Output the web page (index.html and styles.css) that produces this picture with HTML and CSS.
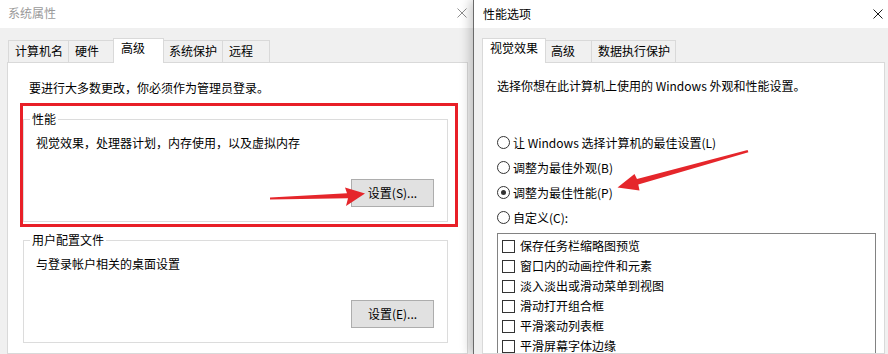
FILE: index.html
```html
<!DOCTYPE html>
<html lang="zh-CN">
<head>
<meta charset="utf-8">
<title>系统属性 - 性能选项</title>
<link rel="stylesheet" href="styles.css">
</head>
<body>
<div class="screen">
  <section class="win win-left">
    <header class="titlebar titlebar-inactive">
      <span class="title">系统属性</span>
      <svg class="close" width="10" height="10" viewBox="0 0 10 10"><path d="M0.5 0.5L9.5 9.5M9.5 0.5L0.5 9.5"/></svg>
    </header>
    <div class="win-body">
      <div class="tabs">
        <div class="tab">计算机名</div>
        <div class="tab">硬件</div>
        <div class="tab active">高级</div>
        <div class="tab">系统保护</div>
        <div class="tab">远程</div>
      </div>
      <div class="panel panel-left">
        <p class="note">要进行大多数更改，你必须作为管理员登录。</p>
        <fieldset class="group group-first">
          <legend>性能</legend>
          <div class="group-body">
            <p class="desc">视觉效果，处理器计划，内存使用，以及虚拟内存</p>
            <div class="btn-row"><button class="btn">设置(S)...</button></div>
          </div>
        </fieldset>
        <fieldset class="group group-second">
          <legend>用户配置文件</legend>
          <div class="group-body">
            <p class="desc">与登录帐户相关的桌面设置</p>
            <div class="btn-row"><button class="btn">设置(E)...</button></div>
          </div>
        </fieldset>
      </div>
    </div>
  </section>

  <section class="win win-right">
    <header class="titlebar">
      <span class="title">性能选项</span>
      <svg class="close" width="10" height="10" viewBox="0 0 10 10"><path d="M0.5 0.5L9.5 9.5M9.5 0.5L0.5 9.5"/></svg>
    </header>
    <div class="win-body">
      <div class="tabs">
        <div class="tab active">视觉效果</div>
        <div class="tab">高级</div>
        <div class="tab">数据执行保护</div>
      </div>
      <div class="panel panel-right">
        <p class="note">选择你想在此计算机上使用的 Windows 外观和性能设置。</p>
        <div class="radios">
          <label class="radio-row"><span class="radio"></span>让 Windows 选择计算机的最佳设置(L)</label>
          <label class="radio-row"><span class="radio"></span>调整为最佳外观(B)</label>
          <label class="radio-row"><span class="radio checked"></span>调整为最佳性能(P)</label>
          <label class="radio-row"><span class="radio"></span>自定义(C):</label>
        </div>
        <div class="listbox">
          <div class="check-row"><span class="check"></span>保存任务栏缩略图预览</div>
          <div class="check-row"><span class="check"></span>窗口内的动画控件和元素</div>
          <div class="check-row"><span class="check"></span>淡入淡出或滑动菜单到视图</div>
          <div class="check-row"><span class="check"></span>滑动打开组合框</div>
          <div class="check-row"><span class="check"></span>平滑滚动列表框</div>
          <div class="check-row"><span class="check"></span>平滑屏幕字体边缘</div>
        </div>
      </div>
    </div>
  </section>

  <svg class="annot" width="888" height="354" viewBox="0 0 888 354">
    <rect x="21.5" y="104.5" width="435" height="121" fill="none" stroke="#e81f27" stroke-width="3"/>
    <polygon fill="#e5262b" points="270,197.5 347,193.3 345,187.5 365,193.6 346,206 348,198.3 270,199.5"/>
    <polygon fill="#e5262b" points="747.6,150 637,179 634.5,174 617.5,187.5 639.5,190.5 638.3,184.4 748.4,152.2"/>
  </svg>
</div>
</body>
</html>
```

FILE: styles.css
```css
* { box-sizing: border-box; }

html, body {
  margin: 0;
  padding: 0;
}

body {
  font-family: "Noto Sans CJK SC", "Microsoft YaHei", "Noto Sans", sans-serif;
  font-size: 12px;
  line-height: 16px;
  color: #000;
  background: #f0f0f0;
}

.screen {
  position: relative;
  width: 888px;
  height: 354px;
  overflow: hidden;
  display: flex;
}

.win {
  height: 354px;
  display: flex;
  flex-direction: column;
  background: #f0f0f0;
}

.win-left {
  width: 473px;
  flex: none;
}

.win-right {
  width: 415px;
  flex: none;
  border-left: 1px solid #6a6a6a;
  position: relative;
  z-index: 2;
  box-shadow: -3px 0 10px rgba(0, 0, 0, 0.22);
}

.titlebar {
  height: 28px;
  flex: none;
  background: #fff;
  display: flex;
  align-items: center;
  justify-content: space-between;
}

.win-left .titlebar {
  padding: 0 6px 2px 8px;
}

.win-right .titlebar {
  padding: 0 5px 0 9px;
}

.title {
  font-size: 12px;
  color: #000;
}

.titlebar-inactive .title {
  color: #9a9a9a;
}

.close {
  display: block;
  fill: none;
  stroke: #1a1a1a;
  stroke-width: 1;
}

.titlebar-inactive .close {
  stroke: #8e8e8e;
}

.win-body {
  flex: 1;
  display: flex;
  flex-direction: column;
  padding-top: 10px;
  min-height: 0;
}

.win-left .win-body {
  padding-left: 7px;
  padding-right: 5px;
}

.win-right .win-body {
  padding-left: 8px;
  padding-right: 3px;
}

.tabs {
  display: flex;
  align-items: flex-end;
  height: 24px;
  flex: none;
  padding-left: 1px;
  position: relative;
  z-index: 1;
}

.win-right .tabs {
  padding-left: 2px;
}

.tab {
  height: 22px;
  min-width: 48px;
  padding: 0 5px 0 6px;
  border: 1px solid #d9d9d9;
  border-bottom: none;
  margin-right: -1px;
  background: #f0f0f0;
  line-height: 20px;
  white-space: nowrap;
}

.tab.active {
  height: 25px;
  min-width: 51px;
  margin: 0 -2px -1px -2px;
  padding: 0 7px 0 7px;
  background: #fff;
  line-height: 18px;
  position: relative;
  z-index: 2;
}

.panel {
  flex: 1;
  background: #fff;
  border: 1px solid #d9d9d9;
  overflow: hidden;
  min-height: 0;
}

.panel-left {
  padding-top: 17px;
}

.panel-right {
  padding: 15px 8px 0 14px;
}

p {
  margin: 0;
}

.panel-left .note {
  padding-left: 21px;
}

.group {
  border: 1px solid #dcdcdc;
  padding: 0;
  margin: 0 19px 0 15px;
  min-width: 0;
}

.group-first {
  margin-top: 15px;
}

.group-second {
  margin-top: 10px;
}

.group legend {
  padding: 0 2px;
  margin-left: 6px;
  line-height: 16px;
}

.group-body {
  padding: 8px 13px 14px 12px;
}

.btn-row {
  display: flex;
  justify-content: flex-end;
  margin-top: 28px;
}

.btn {
  width: 83px;
  height: 28px;
  background: #e1e1e1;
  border: 1px solid #adadad;
  border-radius: 0;
  font-family: inherit;
  font-size: 12px;
  color: #000;
  padding: 0;
  line-height: 16px;
}

.radios {
  margin-top: 36px;
  display: flex;
  flex-direction: column;
}

.radio-row {
  height: 25px;
  display: flex;
  align-items: center;
  gap: 3px;
}

.radio {
  width: 13px;
  height: 13px;
  border: 1px solid #333;
  border-radius: 50%;
  background: #fff;
  display: flex;
  align-items: center;
  justify-content: center;
  flex: none;
}

.radio.checked::after {
  content: "";
  width: 5px;
  height: 5px;
  border-radius: 50%;
  background: #333;
}

.listbox {
  margin-top: 3px;
  border: 1px solid #828282;
  background: #fff;
  padding: 2px 0 40px 4px;
}

.check-row {
  height: 20px;
  display: flex;
  align-items: center;
  gap: 5px;
  white-space: nowrap;
}

.check {
  width: 13px;
  height: 13px;
  border: 1px solid #333;
  background: #fff;
  flex: none;
}

.annot {
  position: absolute;
  left: 0;
  top: 0;
  z-index: 5;
  pointer-events: none;
}
```
